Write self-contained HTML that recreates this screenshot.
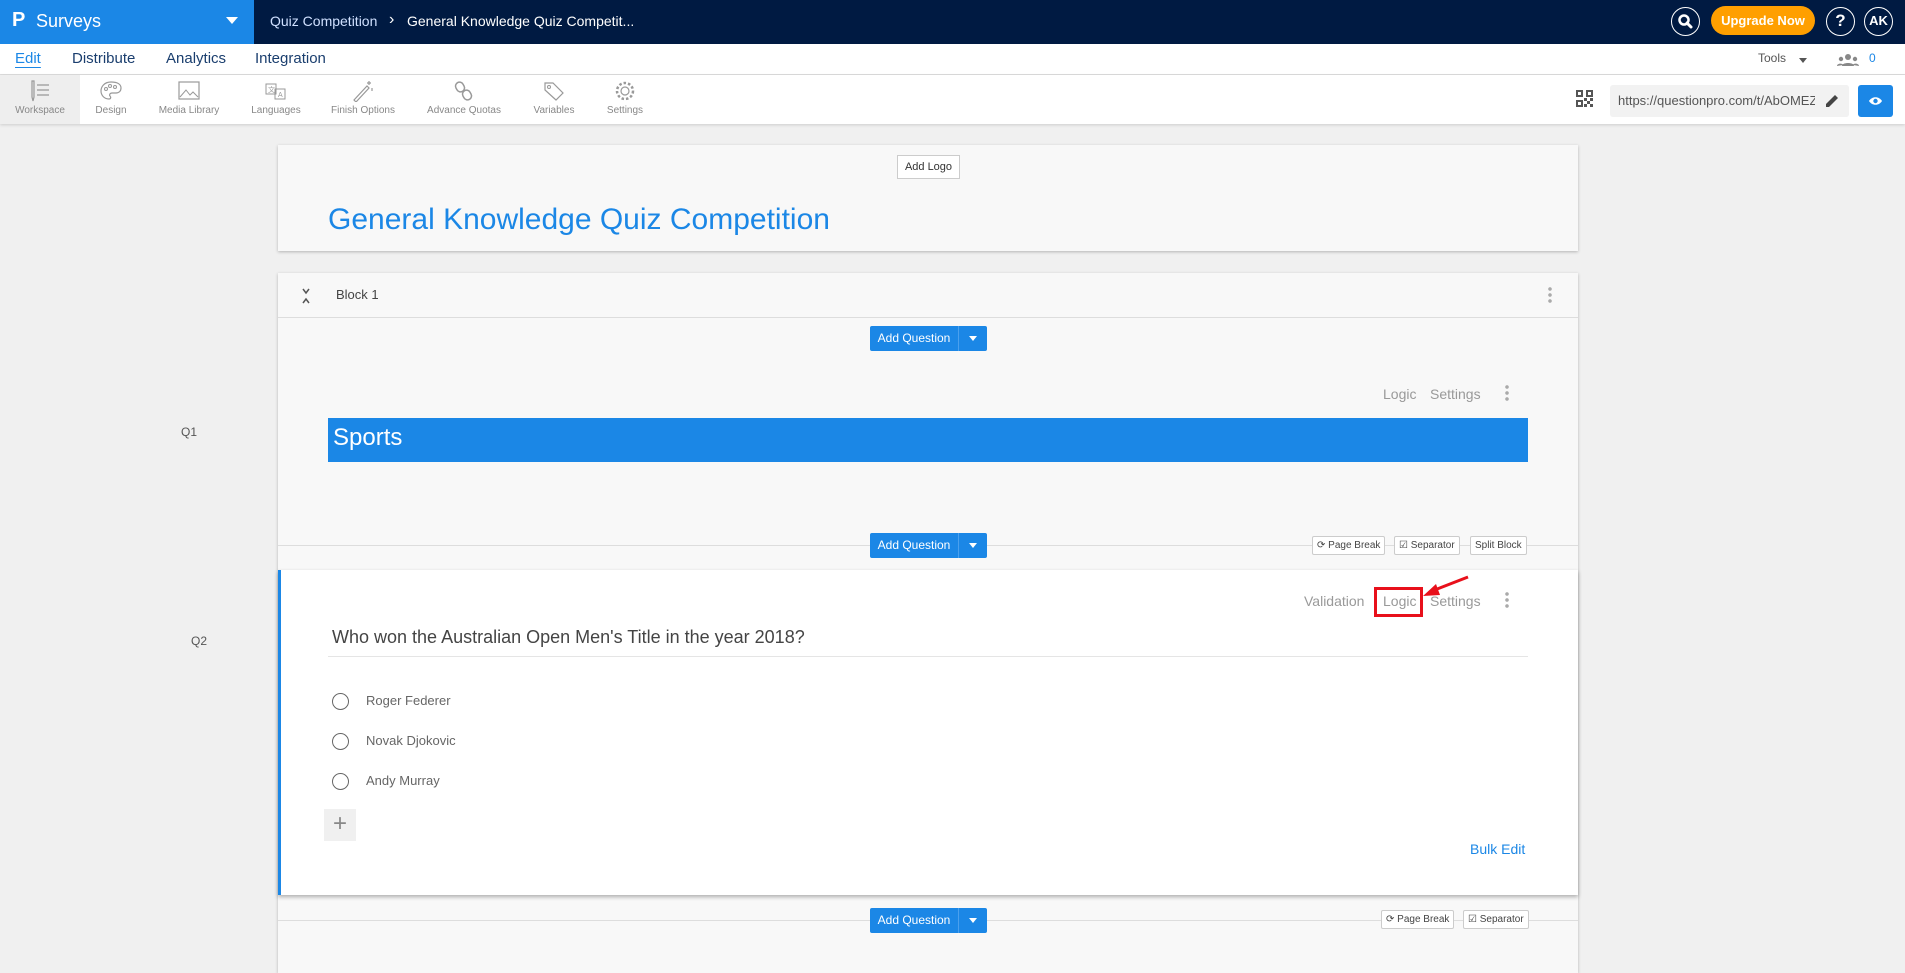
<!DOCTYPE html>
<html><head><meta charset="utf-8"><style>
*{box-sizing:border-box;margin:0;padding:0}
body{width:1905px;height:949px;overflow:hidden;background:#f0f0f0;font-family:"Liberation Sans",sans-serif;position:relative;color:#333}
.a{position:absolute}
.top{left:0;top:0;width:1905px;height:44px;background:#001a42}
.brand{left:0;top:0;width:254px;height:44px;background:#1b87e6;color:#fff;font-size:18px}
.nav{left:0;top:44px;width:1905px;height:31px;background:#fff;border-bottom:1px solid #ddd}
.nav span{position:absolute;top:6px;font-size:15px;color:#1a3e6e}
.tb{left:0;top:75px;width:1905px;height:49px;background:#fff;box-shadow:0 1px 3px rgba(0,0,0,.15)}
.ti{position:absolute;top:0;height:49px;text-align:center;font-size:10px;color:#888}
.ti svg{display:block;margin:5px auto 3px}
.card{background:#f8f8f8;box-shadow:0 1px 3px rgba(0,0,0,.25)}
.aq{position:absolute;width:117px;height:25px;background:#1b87e6;color:#fff;font-size:12px;border-radius:2px}
.aq b{position:absolute;left:0;top:0;width:88px;line-height:25px;text-align:center;font-weight:normal}
.aq i{position:absolute;left:88px;top:0;width:29px;height:25px;border-left:1px solid #4aa0ee}
.aq i:after{content:"";position:absolute;left:10px;top:10px;border:4.5px solid transparent;border-top:5px solid #fff}
.sb{position:absolute;height:19px;border:1px solid #ccc;background:#fff;font-size:10px;color:#444;line-height:17px;padding:0 4px;border-radius:2px}
.lk{position:absolute;font-size:14px;color:#999}
.dots{position:absolute;width:4px;height:18px;background:radial-gradient(circle,#aaa 1.6px,transparent 2px) 0 0/4px 6px}
.opt{position:absolute;left:332px;font-size:13px;color:#666}
.opt:before{content:"";position:absolute;left:0;top:0;width:15px;height:15px;border:1.5px solid #666;border-radius:50%}
.opt span{position:absolute;left:34px;top:0;white-space:nowrap}
</style></head><body>
<div class="a top"></div>
<div class="a brand"><span class="a" style="left:12px;top:9px;font-weight:bold;font-size:20px">P</span><span class="a" style="left:36px;top:11px">Surveys</span><span class="a" style="left:226px;top:17px;border:6px solid transparent;border-top:7px solid #fff"></span></div>
<div class="a" style="left:270px;top:13px;color:#cfe0ff;font-size:14px">Quiz Competition</div>
<div class="a" style="left:389px;top:11px;color:#fff;font-size:16px">›</div>
<div class="a" style="left:407px;top:13px;color:#fff;font-size:14px">General Knowledge Quiz Competit...</div>
<div class="a" style="left:1671px;top:7px;width:29px;height:29px;border:1.5px solid #fff;border-radius:50%"><svg width="26" height="26" viewBox="0 0 26 26"><circle cx="12" cy="12" r="4.5" fill="none" stroke="#fff" stroke-width="2.5"/><path d="M15 15l4 4" stroke="#fff" stroke-width="3" stroke-linecap="round"/></svg></div>
<div class="a" style="left:1711px;top:6px;width:104px;height:29px;background:#ff9f00;border-radius:15px;color:#fff;font-size:13px;font-weight:bold;text-align:center;line-height:29px">Upgrade Now</div>
<div class="a" style="left:1826px;top:7px;width:29px;height:29px;border:1.5px solid #fff;border-radius:50%;color:#fff;font-weight:bold;text-align:center;line-height:26px;font-size:17px">?</div>
<div class="a" style="left:1864px;top:7px;width:29px;height:29px;border:1.5px solid #fff;border-radius:50%;color:#fff;font-weight:bold;text-align:center;line-height:26px;font-size:13px">AK</div>

<div class="a nav"><span style="left:15px;color:#1b87e6;text-decoration:underline;text-underline-offset:4px">Edit</span><span style="left:72px">Distribute</span><span style="left:166px">Analytics</span><span style="left:255px">Integration</span>
<span style="left:1758px;top:7px;font-size:12px;color:#555">Tools</span><span style="left:1799px;top:14px;border:4px solid transparent;border-top:5px solid #555"></span>
<svg class="a" style="left:1837px;top:9px" width="22" height="14" viewBox="0 0 22 14"><circle cx="11" cy="4" r="3" fill="#888"/><circle cx="4" cy="6" r="2.2" fill="#888"/><circle cx="18" cy="6" r="2.2" fill="#888"/><path d="M5 13c0-4 12-4 12 0zM0 13c0-3 6-3 6-1zM16 12c0-2 6-2 6 1z" fill="#888"/></svg>
<span style="left:1869px;top:7px;font-size:12px;color:#1b87e6">0</span></div>

<div class="a tb">
<div class="ti" style="left:0;width:80px;background:#eee">
<svg width="26" height="22" viewBox="0 0 26 22"><path d="M5 1v16l1 4 1-4V1zM10 5h12M10 10h12M10 15h12" stroke="#999" fill="none" stroke-width="1.2"/></svg>Workspace</div>
<div class="ti" style="left:86px;width:50px"><svg width="24" height="22" viewBox="0 0 24 22"><path d="M12 2C5 2 2 7 2 11s3 8 8 8c2 0 2-2 1-3s0-3 2-3h4c3 0 5-2 5-5 0-4-4-6-10-6z" fill="none" stroke="#999" stroke-width="1.2"/><circle cx="7" cy="9" r="1.5" fill="none" stroke="#999"/><circle cx="11" cy="6" r="1.5" fill="none" stroke="#999"/><circle cx="16" cy="7" r="1.5" fill="none" stroke="#999"/></svg>Design</div>
<div class="ti" style="left:154px;width:70px"><svg width="24" height="22" viewBox="0 0 24 22"><rect x="2" y="2" width="20" height="17" fill="none" stroke="#999" stroke-width="1.2"/><path d="M3 17l6-7 4 5 3-3 5 5" fill="none" stroke="#999"/></svg>Media Library</div>
<div class="ti" style="left:246px;width:60px"><svg width="26" height="22" viewBox="0 0 26 22"><rect x="3" y="4" width="10" height="10" fill="none" stroke="#999"/><rect x="12" y="9" width="10" height="10" fill="none" stroke="#999"/><text x="5" y="12" font-size="7" fill="#999">文</text><text x="15" y="17" font-size="7" fill="#999">A</text></svg>Languages</div>
<div class="ti" style="left:328px;width:70px"><svg width="24" height="22" viewBox="0 0 24 22"><path d="M3 20L16 6l2 2L5 22zM18 1v4M16 3h4M21 8v3" stroke="#999" fill="none" stroke-width="1.2"/></svg>Finish Options</div>
<div class="ti" style="left:424px;width:80px"><svg width="24" height="22" viewBox="0 0 24 22"><rect x="4" y="2" width="8" height="10" rx="4" fill="none" stroke="#999" stroke-width="1.5" transform="rotate(-30 8 7)"/><rect x="11" y="10" width="8" height="10" rx="4" fill="none" stroke="#999" stroke-width="1.5" transform="rotate(-30 15 15)"/></svg>Advance Quotas</div>
<div class="ti" style="left:528px;width:52px"><svg width="24" height="22" viewBox="0 0 24 22"><path d="M3 3h8l10 10-7 7L3 10z" fill="none" stroke="#999" stroke-width="1.2"/><circle cx="7" cy="7" r="1.5" fill="none" stroke="#999"/></svg>Variables</div>
<div class="ti" style="left:600px;width:50px"><svg width="24" height="22" viewBox="0 0 24 22"><circle cx="12" cy="11" r="4" fill="none" stroke="#999" stroke-width="1.2"/><circle cx="12" cy="11" r="8" fill="none" stroke="#999" stroke-width="2.5" stroke-dasharray="2.5 2"/></svg>Settings</div>
<svg class="a" style="left:1576px;top:15px" width="17" height="17" viewBox="0 0 17 17"><path d="M0 0h7v7H0zM2 2v3h3V2zM10 0h7v7h-7zM12 2v3h3V2zM0 10h7v7H0zM2 12v3h3v-3zM8 8h3v3H8zM11 11h3v3h-3zM14 14h3v3h-3zM14 8h3v3h-3zM8 14h3v3H8z" fill="#555" fill-rule="evenodd"/></svg>
<div class="a" style="left:1610px;top:10px;width:239px;height:32px;background:#f2f2f2;border-radius:3px;font-size:13px;color:#555;line-height:32px;padding-left:8px;overflow:hidden;white-space:nowrap">https://questionpro.com/t/AbOMEZ<span style="position:absolute;right:0;top:0;width:34px;height:32px;background:#f2f2f2"></span></div>
<svg class="a" style="left:1824px;top:18px" width="16" height="16" viewBox="0 0 16 16"><path d="M2 14v-3L11 2l3 3-9 9z" fill="#444"/></svg>
<div class="a" style="left:1858px;top:10px;width:35px;height:32px;background:#1b87e6;border-radius:3px"><svg style="margin:10px 0 0 10px" width="15" height="12" viewBox="0 0 15 12"><path d="M1 6c3-5 10-5 13 0-3 5-10 5-13 0z" fill="#fff"/><circle cx="7.5" cy="6" r="2.2" fill="#1b87e6"/></svg></div>
</div>

<div class="a card" style="left:278px;top:145px;width:1300px;height:106px">
<div class="a" style="left:619px;top:10px;width:63px;height:24px;border:1px solid #ccc;background:#fff;font-size:11px;line-height:22px;text-align:center;color:#333">Add Logo</div>
<div class="a" style="left:50px;top:58px;font-size:30px;color:#1b87e6">General Knowledge Quiz Competition</div>
</div>

<div class="a card" style="left:278px;top:273px;width:1300px;height:700px">
<div class="a" style="left:0;top:0;width:1300px;height:45px;border-bottom:1px solid #ddd"></div>
<svg class="a" style="left:23px;top:14px" width="10" height="18" viewBox="0 0 10 18"><path d="M2 2l3 4 3-4M2 16l3-4 3 4" stroke="#555" stroke-width="1.5" fill="none"/></svg>
<div class="a" style="left:58px;top:14px;font-size:13px;color:#444">Block 1</div>
<div class="dots" style="left:1270px;top:13px"></div>
<div class="a" style="left:0;top:272px;width:1300px;height:1px;background:#ddd"></div>
</div>
<div class="aq" style="left:870px;top:326px"><b>Add Question</b><i></i></div>
<div class="lk" style="left:1383px;top:386px">Logic</div>
<div class="lk" style="left:1430px;top:386px">Settings</div>
<div class="dots" style="left:1505px;top:384px"></div>
<div class="a" style="left:181px;top:425px;font-size:12px;color:#555">Q1</div>
<div class="a" style="left:328px;top:418px;width:1200px;height:44px;background:#1b87e6;color:#fff;font-size:24px;padding:6px 0 0 5px">Sports</div>
<div class="aq" style="left:870px;top:533px"><b>Add Question</b><i></i></div>
<div class="sb" style="left:1312px;top:536px">⟳ Page Break</div>
<div class="sb" style="left:1394px;top:536px">☑ Separator</div>
<div class="sb" style="left:1470px;top:536px">Split Block</div>

<div class="a" style="left:278px;top:570px;width:1300px;height:325px;background:#fff;border-left:3px solid #1b87e6;box-shadow:0 2px 4px rgba(0,0,0,.3)"></div>
<div class="a" style="left:191px;top:634px;font-size:12px;color:#555">Q2</div>
<div class="lk" style="left:1304px;top:593px">Validation</div>
<div class="lk" style="left:1383px;top:593px">Logic</div>
<div class="a" style="left:1374px;top:587px;width:49px;height:30px;border:3px solid #e8101b"></div>
<div class="lk" style="left:1430px;top:593px">Settings</div>
<div class="dots" style="left:1505px;top:591px"></div>
<svg class="a" style="left:1420px;top:574px" width="52" height="26" viewBox="0 0 52 26"><path d="M48 3L12 17" stroke="#e8101b" stroke-width="3"/><path d="M3 22l13-12 4 11z" fill="#e8101b"/></svg>
<div class="a" style="left:332px;top:627px;font-size:18px;color:#444">Who won the Australian Open Men's Title in the year 2018?</div>
<div class="a" style="left:328px;top:656px;width:1200px;height:1px;background:#e5e5e5"></div>
<div class="opt" style="top:693px"><span>Roger Federer</span></div>
<div class="opt" style="top:733px"><span>Novak Djokovic</span></div>
<div class="opt" style="top:773px"><span>Andy Murray</span></div>
<div class="a" style="left:324px;top:809px;width:32px;height:32px;background:#f0f0f0;color:#888;font-size:24px;text-align:center;line-height:30px">+</div>
<div class="a" style="left:1470px;top:841px;font-size:14px;color:#1b87e6">Bulk Edit</div>

<div class="a" style="left:278px;top:920px;width:1300px;height:1px;background:#ddd"></div>
<div class="aq" style="left:870px;top:908px"><b>Add Question</b><i></i></div>
<div class="sb" style="left:1381px;top:910px">⟳ Page Break</div>
<div class="sb" style="left:1463px;top:910px">☑ Separator</div>
</body></html>
